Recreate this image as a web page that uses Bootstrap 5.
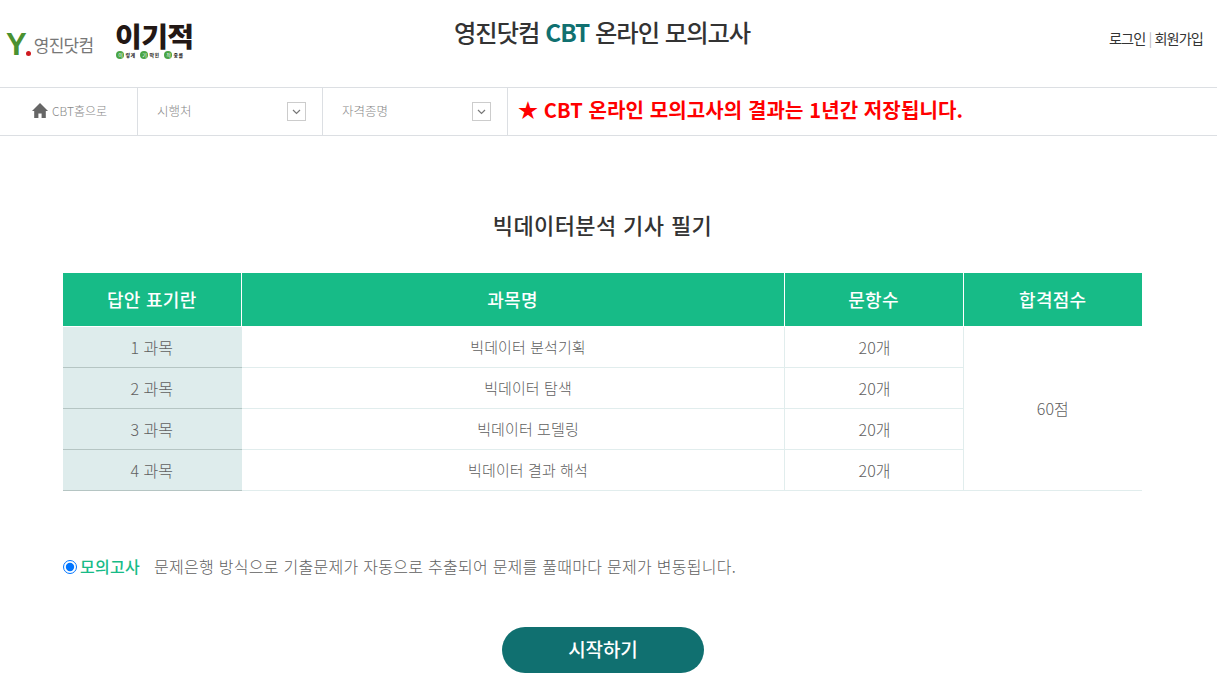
<!DOCTYPE html>
<html lang="ko">
<head>
    <meta charset="UTF-8">
    <meta name="viewport" content="width=device-width, initial-scale=1">
    <title>영진닷컴 CBT 온라인 모의고사</title>
    <link href="https://cdn.jsdelivr.net/npm/bootstrap@5.3.0/dist/css/bootstrap.min.css" rel="stylesheet">
    <style>
        html, body { height: 686px; overflow: hidden; }
        body { font-family: "Noto Sans CJK KR", "Noto Sans", sans-serif; color: #666; background: #fff; }
        .top-head { height: 87px; position: relative; }
        .logo-box { width: 200px; padding-left: 6px; gap: 21px; }
        .logo-y { display: flex; align-items: center; color: #777; font-size: 17px; letter-spacing: -.7px; line-height: 1; margin-top: 2px; }
        .logo-y b { font-family: "Liberation Sans", sans-serif; font-size: 31px; line-height: 1; color: #4a9130; letter-spacing: -1px; }
        .logo-y i { display: inline-block; width: 5px; height: 5px; border-radius: 50%; background: #cf1a20; margin: 18px 3px 0 0; }
        .logo-win { width: 78px; color: #231815; line-height: 1; margin: -6px 0 0 1px; }
        .logo-win strong { display: block; font-size: 27px; font-weight: 900; line-height: 27px; white-space: nowrap; letter-spacing: -.6px; transform-origin: left center; transform: scaleX(1.08); }
        .logo-sub { display: flex; align-items: center; height: 9px; margin-top: 1px; padding-left: 1px; }
        .logo-sub span { font-size: 5px; font-weight: 700; line-height: 7px; width: 16px; padding-left: 1px; white-space: nowrap; letter-spacing: .4px; }
        .logo-sub em { font-style: normal; display: inline-block; width: 8px; height: 8px; flex: none; border-radius: 50%; background: #4aa544; color: #fff; font-size: 5px; line-height: 8px; text-align: center; }
        .site-title { font-size: 24.3px; font-weight: 500; color: #333; letter-spacing: -1px; margin: -23px 0 0; position: absolute; left: 454px; white-space: nowrap; }
        .site-title span { color: #107070; font-weight: 700; }
        .user-links { font-size: 14.2px; color: #333; letter-spacing: -.9px; margin: -9px 14px 0 auto; }
        .user-links a { color: #333; text-decoration: none; }
        .user-links u { text-decoration: none; color: #bbb; margin: 0 3px; }
        .sub-nav { height: 49px; border-top: 1px solid #dcdfe3; border-bottom: 1px solid #dcdfe3; }
        .nav-home { width: 138px; border-right: 1px solid #dcdfe3; font-size: 12px; font-weight: 300; color: #888; padding-left: 32px; padding-bottom: 2px; }
        .nav-sel { width: 185px; border-right: 1px solid #dcdfe3; font-size: 12.5px; font-weight: 300; color: #888; padding: 0 16px 0 19px; }
        .sel-arrow { width: 19px; height: 19px; border: 1px solid #ccc; }
        .nav-notice { font-size: 20px; font-weight: 700; color: #f00; padding: 0 0 3px 10px; letter-spacing: .11px; white-space: nowrap; }
        .exam-name { font-size: 22px; font-weight: 500; color: #333; text-align: center; margin: 72px 0 33px; line-height: 32px; letter-spacing: .38px; }
        .wrap-main { padding: 0 75px 0 63px; }
        .exam-table { table-layout: fixed; width: 1079px; margin: 0; font-size: 16px; font-weight: 300; color: #606060; text-align: center; }
        .exam-table th { background: #17bb87; color: #fff; font-size: 18px; font-weight: 500; height: 53px; padding: 0; vertical-align: middle; border: 0; border-right: 1px solid #fff; border-bottom: 1px solid #fff; letter-spacing: .3px; }
        .exam-table th:last-child { border-right: 0; }
        .exam-table td { height: 41px; padding: 0; vertical-align: middle; color: #606060; border: 0; border-bottom: 1px solid #e1eded; border-right: 1px solid #e1eded; }
        .exam-table td.pass-cell { border-right: 0; }
        .exam-table td.subj { background: #deecec; border-bottom-color: #b5c5c3; border-right: 1px solid #deecec; }
        .exam-table td.sname { font-size: 15px; padding: 2px 0 0 31px; letter-spacing: .1px; }
        .exam-table td.qty { padding-left: 2px; }
        .mode-row { margin-top: 61px; font-size: 16px; font-weight: 300; line-height: 28px; }
        .mode-row input { width: 14px; height: 14px; margin: 2px 3px 0 0; accent-color: #0075ff; }
        .mode-row b { color: #17bb87; font-weight: 500; margin-right: 14px; letter-spacing: .3px; }
        .mode-row span { letter-spacing: .27px; color: #606060; }
        .start-btn { width: 202px; height: 46px; border-radius: 23px; background: #107070; color: #fff; font-size: 19px; font-weight: 500; border: 0; padding: 0; letter-spacing: -.1px; }
        .start-btn:hover { background: #107070; color: #fff; }
        .btn-row { margin-top: 47px; padding-left: 439px; }
    </style>
</head>
<body>
    <header class="top-head d-flex align-items-center">
        <div class="logo-box d-flex align-items-center flex-shrink-0">
            <div class="logo-y text-nowrap"><b>Y</b><i></i>영진닷컴</div>
            <div class="logo-win">
                <strong>이기적</strong>
                <div class="logo-sub"><em>이</em><span>렇게</span><em>기</em><span>막힌</span><em>적</em><span>중률</span></div>
            </div>
        </div>
        <h1 class="site-title mb-0">영진닷컴 <span>CBT</span> 온라인 모의고사</h1>
        <div class="user-links"><a href="#">로그인</a><u>|</u><a href="#">회원가입</a></div>
    </header>

    <nav class="sub-nav d-flex">
        <div class="nav-home d-flex align-items-center gap-1">
            <svg width="16" height="15" viewBox="0 0 16 15"><path d="M8 0 0 8h2.200v7h4.200v-4.500h3.200V15h4.200V8H16z" fill="#666"/></svg>
            CBT홈으로
        </div>
        <div class="nav-sel d-flex align-items-center justify-content-between">
            <span>시행처</span>
            <span class="sel-arrow d-flex align-items-center justify-content-center"><svg width="9" height="6" viewBox="0 0 9 6"><path d="m1 1 3.500 3.500L8 1" fill="none" stroke="#777" stroke-width="1.200"/></svg></span>
        </div>
        <div class="nav-sel d-flex align-items-center justify-content-between">
            <span>자격종명</span>
            <span class="sel-arrow d-flex align-items-center justify-content-center"><svg width="9" height="6" viewBox="0 0 9 6"><path d="m1 1 3.500 3.500L8 1" fill="none" stroke="#777" stroke-width="1.200"/></svg></span>
        </div>
        <div class="nav-notice d-flex align-items-center">★ CBT 온라인 모의고사의 결과는 1년간 저장됩니다.</div>
    </nav>

    <main class="wrap-main">
        <h2 class="exam-name">빅데이터분석 기사 필기</h2>
        <table class="table exam-table">
            <colgroup>
                <col style="width:178px"><col style="width:543px"><col style="width:179px"><col style="width:179px">
            </colgroup>
            <thead>
                <tr><th>답안 표기란</th><th>과목명</th><th>문항수</th><th>합격점수</th></tr>
            </thead>
            <tbody>
                <tr><td class="subj">1 과목</td><td class="sname">빅데이터 분석기획</td><td class="qty">20개</td><td class="pass-cell" rowspan="4">60점</td></tr>
                <tr><td class="subj">2 과목</td><td class="sname">빅데이터 탐색</td><td class="qty">20개</td></tr>
                <tr><td class="subj">3 과목</td><td class="sname">빅데이터 모델링</td><td class="qty">20개</td></tr>
                <tr><td class="subj">4 과목</td><td class="sname">빅데이터 결과 해석</td><td class="qty">20개</td></tr>
            </tbody>
        </table>
        <div class="mode-row d-flex align-items-center">
            <input type="radio" name="mode" checked>
            <b>모의고사</b>
            <span>문제은행 방식으로 기출문제가 자동으로 추출되어 문제를 풀때마다 문제가 변동됩니다.</span>
        </div>
        <div class="btn-row"><button type="button" class="btn start-btn">시작하기</button></div>
    </main>

    <script src="https://cdn.jsdelivr.net/npm/bootstrap@5.3.0/dist/js/bootstrap.bundle.min.js"></script>
</body>
</html>
